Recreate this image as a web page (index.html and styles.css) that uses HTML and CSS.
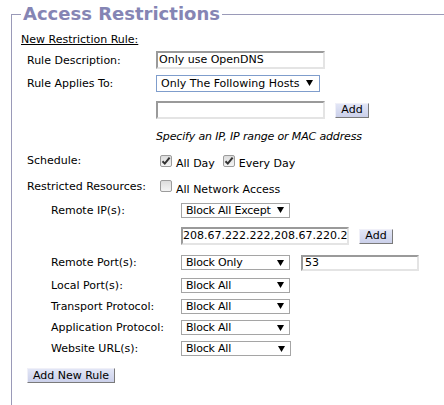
FILE: index.html
```html
<!DOCTYPE html>
<html>
<head>
<meta charset="utf-8">
<link rel="stylesheet" href="styles.css">
</head>
<body>
<fieldset class="panel">
  <legend class="panel-title">Access Restrictions</legend>
  <div class="form">
    <div class="heading"><span>New Restriction Rule:</span></div>

    <div class="row r-desc">
      <div class="label">Rule Description:</div>
      <div class="ctrl"><div class="input in-desc">Only use OpenDNS</div></div>
    </div>

    <div class="row r-applies">
      <div class="label">Rule Applies To:</div>
      <div class="ctrl">
        <div class="select sel-applies focus"><span>Only The Following Hosts</span><svg class="arrow" width="7" height="6" viewBox="0 0 7 6"><polygon points="0,0 7,0 3.5,6" fill="#000"/></svg></div>
      </div>
    </div>

    <div class="row r-host">
      <div class="label"></div>
      <div class="ctrl"><div class="input in-host"></div><button class="btn btn-add">Add</button></div>
    </div>

    <div class="row r-hint">
      <div class="label"></div>
      <div class="ctrl hint">Specify an IP, IP range or MAC address</div>
    </div>

    <div class="row r-sched">
      <div class="label">Schedule:</div>
      <div class="ctrl checks">
        <span class="cb"><svg width="10" height="10" viewBox="0 0 10 10"><path d="M1.5 5.2 L3.8 7.6 L8.6 1.6" fill="none" stroke="#333" stroke-width="2"/></svg></span><span class="cb-text">All Day</span>
        <span class="cb cb2"><svg width="10" height="10" viewBox="0 0 10 10"><path d="M1.5 5.2 L3.8 7.6 L8.6 1.6" fill="none" stroke="#333" stroke-width="2"/></svg></span><span class="cb-text">Every Day</span>
      </div>
    </div>

    <div class="row r-res">
      <div class="label">Restricted Resources:</div>
      <div class="ctrl checks">
        <span class="cb cb-low"></span><span class="cb-text">All Network Access</span>
      </div>
    </div>

    <div class="row sub r-rip">
      <div class="label">Remote IP(s):</div>
      <div class="ctrl">
        <div class="select sel-sub"><span>Block All Except</span><svg class="arrow" width="7" height="6" viewBox="0 0 7 6"><polygon points="0,0 7,0 3.5,6" fill="#000"/></svg></div>
      </div>
    </div>

    <div class="row sub r-ipin">
      <div class="label"></div>
      <div class="ctrl"><div class="input in-ip">208.67.222.222,208.67.220.2</div><button class="btn btn-add2">Add</button></div>
    </div>

    <div class="row sub r-rport">
      <div class="label">Remote Port(s):</div>
      <div class="ctrl">
        <div class="select sel-sub"><span>Block Only</span><svg class="arrow" width="7" height="6" viewBox="0 0 7 6"><polygon points="0,0 7,0 3.5,6" fill="#000"/></svg></div>
        <div class="input in-port">53</div>
      </div>
    </div>

    <div class="row sub r-lport">
      <div class="label">Local Port(s):</div>
      <div class="ctrl">
        <div class="select sel-sub"><span>Block All</span><svg class="arrow" width="7" height="6" viewBox="0 0 7 6"><polygon points="0,0 7,0 3.5,6" fill="#000"/></svg></div>
      </div>
    </div>

    <div class="row sub r-tp">
      <div class="label">Transport Protocol:</div>
      <div class="ctrl">
        <div class="select sel-sub"><span>Block All</span><svg class="arrow" width="7" height="6" viewBox="0 0 7 6"><polygon points="0,0 7,0 3.5,6" fill="#000"/></svg></div>
      </div>
    </div>

    <div class="row sub r-ap">
      <div class="label">Application Protocol:</div>
      <div class="ctrl">
        <div class="select sel-sub"><span>Block All</span><svg class="arrow" width="7" height="6" viewBox="0 0 7 6"><polygon points="0,0 7,0 3.5,6" fill="#000"/></svg></div>
      </div>
    </div>

    <div class="row sub r-url">
      <div class="label">Website URL(s):</div>
      <div class="ctrl">
        <div class="select sel-sub sel-wide"><span>Block All</span><svg class="arrow" width="7" height="6" viewBox="0 0 7 6"><polygon points="0,0 7,0 3.5,6" fill="#000"/></svg></div>
      </div>
    </div>

    <div class="row r-btn">
      <button class="btn btn-new">Add New Rule</button>
    </div>
  </div>
</fieldset>
</body>
</html>
```

FILE: styles.css
```css
html, body {
  margin: 0;
  padding: 0;
  background: #fff;
}
body {
  font-family: "DejaVu Sans", Verdana, sans-serif;
  font-size: 11px;
  color: #000;
  overflow: hidden;
  width: 444px;
  height: 405px;
}
.panel {
  margin: 0 0 0 11px;
  padding: 0;
  border: 1px solid #9a9ab8;
  border-right: none;
  border-bottom: none;
  width: 433px;
  height: 405px;
  box-sizing: border-box;
  min-width: 0;
}
.panel-title {
  margin-left: 9px;
  padding: 0 2px;
  font-size: 18px;
  font-weight: bold;
  color: #8585b4;
  line-height: 28px;
}
.form {
  display: flex;
  flex-direction: column;
  padding-left: 9px;
  margin-top: 4px;
}
.heading {
  height: 14px;
  display: flex;
  align-items: center;
}
.heading span {
  text-decoration: underline;
}
.row {
  display: grid;
  grid-template-columns: 129px auto;
  align-items: center;
  padding-left: 6px;
}
.row.sub {
  padding-left: 30px;
  grid-template-columns: 130px auto;
}
.ctrl {
  display: flex;
  align-items: center;
}
.r-desc { height: 24px; margin-top: 2px; }
.r-applies { height: 22px; }
.r-host { height: 32px; }
.r-hint { height: 20px; }
.r-sched { height: 28px; }
.r-res { height: 24px; }
.r-rip { height: 24px; }
.r-ipin { height: 28px; }
.r-rport { height: 25px; }
.r-lport { height: 20px; }
.r-tp { height: 22px; }
.r-ap { height: 21px; }
.r-url { height: 21px; }
.r-btn { height: 33px; display: flex; padding-left: 6px; }

.input {
  box-sizing: border-box;
  height: 18px;
  border: 2px solid;
  border-color: #9a9a9a #e4e4e4 #e4e4e4 #9a9a9a;
  background: #fff;
  padding: 0 0 0 1px;
  line-height: 14px;
  white-space: nowrap;
  overflow: hidden;
}
.in-desc, .in-host { width: 169px; }
.in-ip { width: 168px; padding-left: 0; }
.in-port { width: 118px; height: 16px; line-height: 12px; margin-left: 11px; padding-left: 2px; }

.select {
  box-sizing: border-box;
  display: flex;
  align-items: center;
  justify-content: space-between;
  border: 1px solid #a5a5a5;
  background: #fff;
  white-space: nowrap;
}
.select .arrow { flex: none; }
.sel-applies {
  width: 164px;
  height: 17px;
  padding: 0 6px 0 4px;
  border-color: #7f9dcc;
}
.sel-sub {
  width: 109px;
  height: 15px;
  padding: 0 5px 0 4px;
  letter-spacing: -0.2px;
}
.sel-wide { width: 110px; }

.btn {
  box-sizing: border-box;
  font-family: "DejaVu Sans", Verdana, sans-serif;
  font-size: 11px;
  color: #000;
  margin: 0;
  padding: 0;
  height: 15px;
  line-height: 12px;
  background: linear-gradient(#e2e6f6, #cbd0ea);
  border: 1px solid;
  border-color: #f0f0f8 #7a7a7a #7a7a7a #f0f0f8;
}
.btn-add { width: 34px; margin-left: 10px; }
.btn-add2 { width: 34px; margin-left: 10px; }
.btn-new { width: 88px; }

.hint {
  font-style: italic;
  white-space: nowrap;
  letter-spacing: -0.15px;
}

.checks {
  padding-top: 6px;
}
.cb {
  box-sizing: border-box;
  width: 12px;
  height: 12px;
  border: 1px solid #9c9c9c;
  border-radius: 2px;
  background: linear-gradient(#dcdcdc, #f4f4f4);
  display: inline-flex;
  align-items: center;
  justify-content: center;
  margin: 0 4px 0 4px;
  position: relative;
  top: -2px;
}
.cb-low { top: -3px; }
.cb2 { margin-left: 8px; }
.cb-text { white-space: nowrap; }
```
